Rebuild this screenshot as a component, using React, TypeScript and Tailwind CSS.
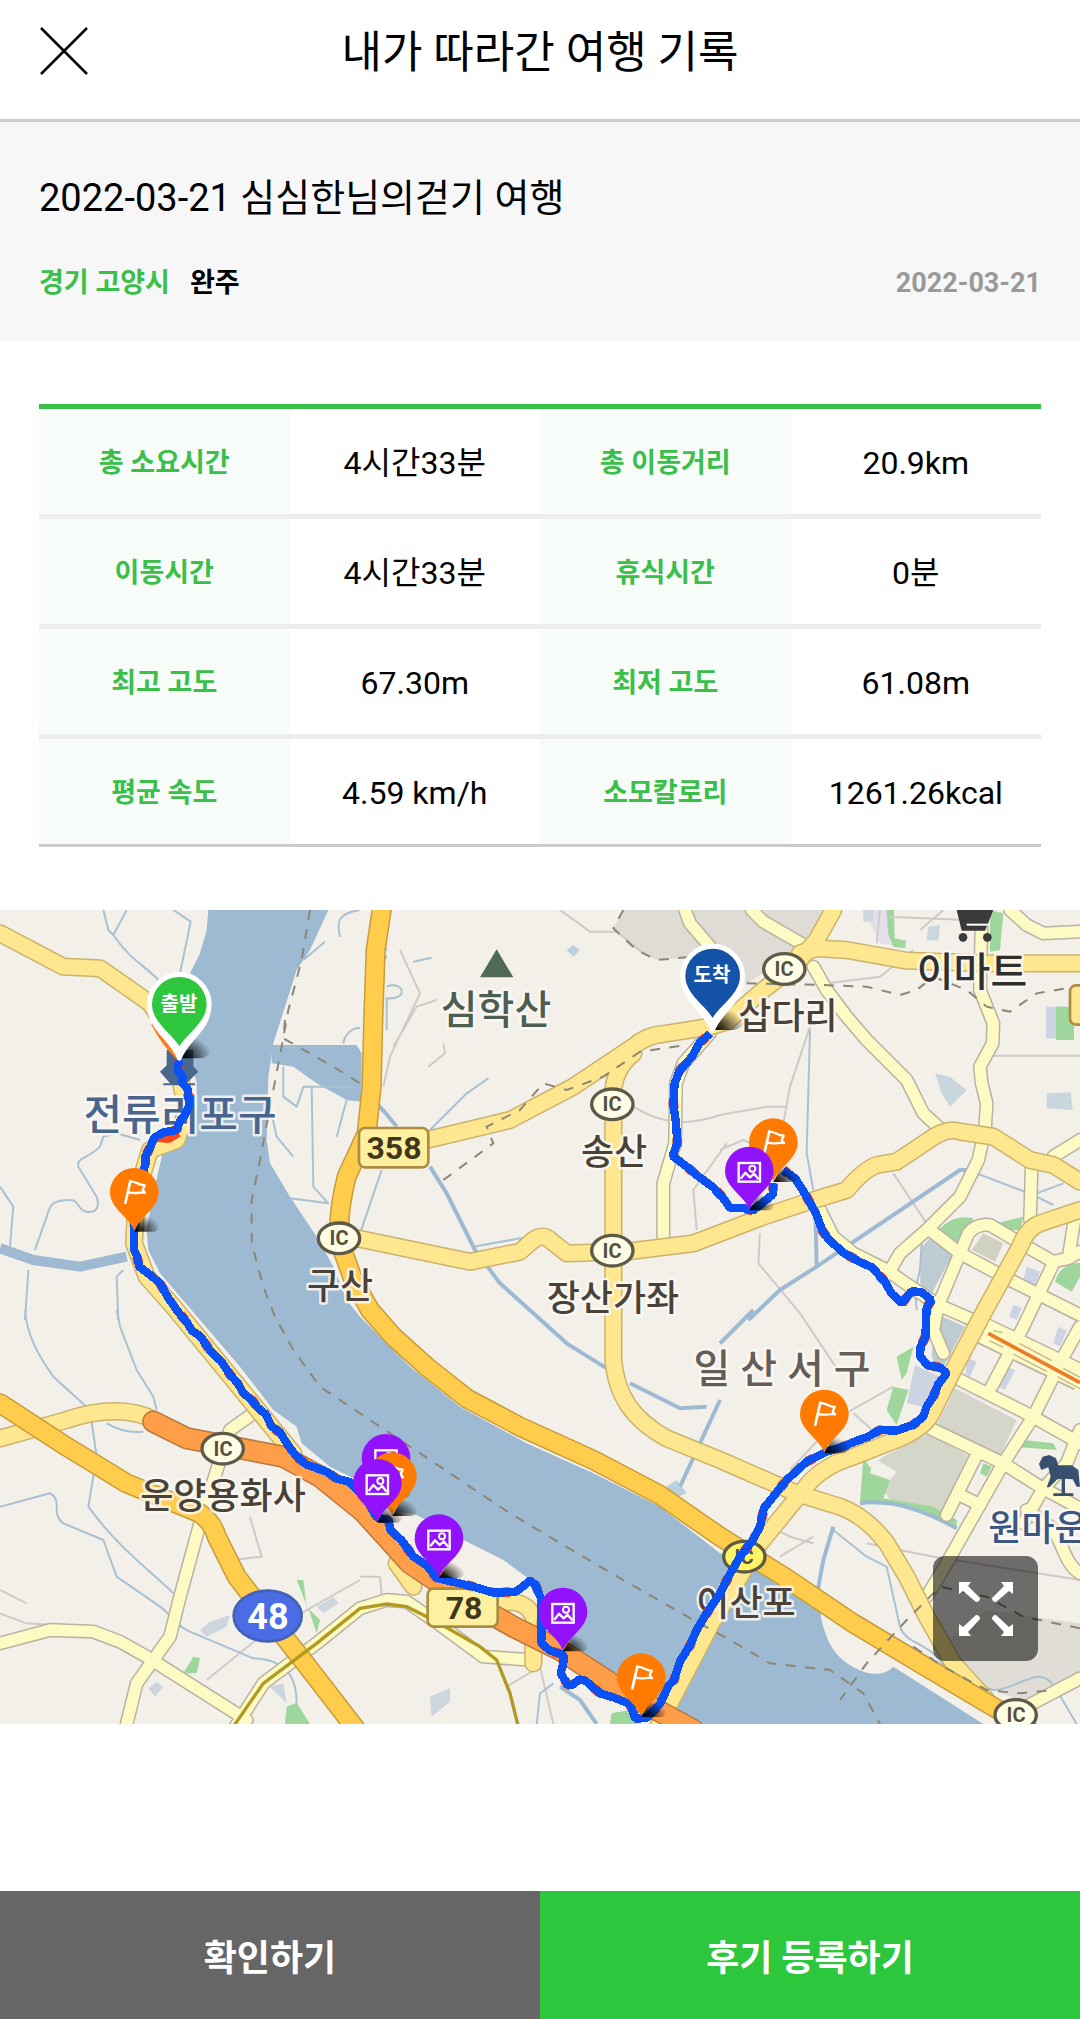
import type { ReactNode } from "react";

interface StatRow {
	label: string;
	value: string;
	label2: string;
	value2: string;
}

interface Point {
	x: number;
	y: number;
}

interface MapLabel extends Point {
	text: string;
	className: string;
}

const STATS: StatRow[] = [
	{ label: "총 소요시간", value: "4시간33분", label2: "총 이동거리", value2: "20.9km" },
	{ label: "이동시간", value: "4시간33분", label2: "휴식시간", value2: "0분" },
	{ label: "최고 고도", value: "67.30m", label2: "최저 고도", value2: "61.08m" },
	{ label: "평균 속도", value: "4.59 km/h", label2: "소모칼로리", value2: "1261.26kcal" },
];

// Map shapes use a 3240 x 2442 grid, map labels a 1080 x 814 grid.
const RIVER =
	"M625 0L620 60L600 130L570 190L560 400L590 520L590 600L560 670L490 720L460 850L440 960L445 1020L480 1090L600 1230L720 1370L820 1500L890 1550L905 1600L990 1670L1060 1705L1130 1790L1250 1815L1410 1900L1510 1950L1620 2030L1720 2210L1760 2235L1790 2280L1870 2320L1980 2380L2090 2442L2950 2442L2680 2270Q2650 2300 2600 2288Q2510 2260 2480 2180Q2455 2120 2460 2050L2160 1930L1980 1790L1780 1690L1580 1600L1380 1490L1230 1370L1080 1220L1040 1170L1000 1070L950 980L870 860L810 760L800 690L805 500L820 400L890 180L930 120L985 0Z";

const STREAMS = [
	"M310 0L325 60L340 75L380 0M340 75C390 150 440 170 480 215M520 0L572 35L540 190",
	"M1080 0C1010 10 1010 40 1020 80M910 150L975 95M1030 400C1035 370 1060 350 1080 355",
	"M810 590L830 680L880 740M850 470L850 560L890 590L910 530L1060 530M935 530L940 830L985 880L870 865M1040 570L1010 680",
	"M420 690L350 670L310 680L300 710C260 750 230 740 235 770L290 860C300 890 290 910 260 905C230 900 240 870 210 870C150 870 150 890 140 920L105 1020M0 830L40 890L30 1010M85 1080L75 1230M370 1080L350 1100L355 1230",
	"M75 1200C80 1270 110 1330 160 1400L270 1500L290 1640L265 1790C360 1920 450 1980 520 2050M350 1200L360 1250L410 1380L460 1460L470 1500M320 1540Q370 1570 430 1565",
	"M0 1790L150 1750C190 1770 150 1810 190 1840L310 1890L350 2000L480 2090C520 2120 530 2150 570 2165L760 2245C850 2250 890 2290 890 2380",
	"M1290 660L1400 550L1465 505M1080 970L1145 780M1160 230C1210 210 1230 270 1160 265L1160 360M1240 155L1295 143",
	"M1420 1010L1560 985L1620 990M2430 360L2420 730L2440 840M2930 790L3100 855L3160 885M3110 850L3190 820",
	"M2500 1860L2600 1940L2660 1970L2700 2150C2720 2210 2800 2190 2850 2300L2980 2340C3060 2340 3120 2250 3170 2340L3230 2442",
	"M1610 2442L1620 2350L1660 2320M2765 1000L2760 1080L2745 1140L2750 1200",
];

const WIDE_STREAMS = [
	"M1155 0L1145 60L1120 130L1160 115M1160 140L1110 145",
	"M1120 570Q1160 610 1190 650M1290 770L1340 850L1425 1020L1500 1120L1600 1210L1700 1300L1820 1375M1890 1420L2040 1495L2120 1490M2160 1470L2040 1730",
	"M2245 1230L2340 1140L2450 1070L2880 780L2920 780",
	"M2445 850L2450 1070",
	"M2500 1850L2470 1950L2450 2060L2520 2120M2160 1300L2260 1200M2580 1780Q2700 1760 2870 1855",
	"M1680 2330L1740 2370L1790 2442",
];

const MINOR_ROADS = [
	"M1680 0L1770 65L1850 65L1930 130M1200 120L1260 250L1170 440L1150 530M1310 270L1250 290L1180 410M1330 400L1335 430L1285 470",
	"M1900 590C1980 640 2060 650 2160 615L2300 590L2360 590M2160 720L2230 690L2300 720M2430 350L2370 530L2350 640L2320 700M2090 960L2080 840L2180 700",
	"M2280 970L2275 1060L2400 1210L2520 1390M2680 790L2780 940M2980 437L3240 437M2340 1940L2440 1880M2330 1860L2370 1880L2440 1900M2600 1900L2800 1940L3240 2010",
	"M2370 1680L2520 1520L2680 1430M2560 1510L2640 1580M2640 0L2630 100M2740 120L2640 200L2480 220M2670 20L2900 30M2830 0L2760 60",
	"M0 2110L80 2140L250 2150M750 1820L785 1940L700 1950M620 2310L780 2180L1080 2010M1080 2000L1140 2000L1145 2060M1520 2330L1620 2270L1660 2442M0 2040L80 2080",
];

const CREAM_ROADS = [
	"M2055 0L2070 40L2130 110",
	"M2255 0L2290 35L2420 110",
	"M2440 170L2480 240L2540 320L2600 390L2720 510L2770 610L2830 665",
	"M2945 20L2940 240L2980 340L2978 400L2940 470L2945 520L2960 580L2955 660L2935 750L2880 860L2780 960L2700 1030L2665 1090",
	"M3030 0L3080 45L3130 70L3240 65",
	"M2130 370L2050 460L2028 520L2025 700L1990 820L1990 980",
	"M2460 900L2500 980L2560 1030L2660 1080L2710 1115L2815 1185L2930 1235",
	"M3240 690L3160 740M3095 770L3090 930",
	"M2790 960L2880 1030L3030 1110L3240 1215M2815 1185L2880 1030L2905 970Q2930 940 2970 945L3080 1010L3160 1055L3205 1045L3225 920M3205 1045L3240 1025",
	"M2815 1185L2800 1260L2830 1330M3160 1060L3070 1250L2975 1430M3240 1250L3190 1340L3100 1520L3010 1660L2840 1960L2780 2060",
	"M2860 1400L3080 1510L3240 1600M2790 1555L3010 1660L3120 1730L3240 1795M2925 1645L2840 1815M3240 1560L3200 1660L3130 1735L3070 1840M2880 1755L2940 1785",
	"M3080 1800L3150 1850C3190 1890 3190 1960 3240 1990M3060 2400L3240 2305",
	"M0 2200L150 2160L280 2165L360 2195L440 2240L740 2430M760 1510L690 1560L660 1650L600 1840L540 2060L510 2180L410 2320L380 2442",
	"M700 2460L790 2320L950 2200L1080 2095L1160 2070L1220 2075L1300 2130L1450 2240L1600 2250",
];

const YELLOW_ROADS = [
	"M0 70L190 170L300 175L450 280L530 400L545 530L560 600L530 690L450 720L410 850L402 1000L440 1100L520 1190L700 1410L880 1630",
	"M1280 690L1530 630L1720 530L1900 410Q1940 375 1990 372L2130 350L2180 335L2290 240L2380 170L2450 90L2500 0",
	"M2400 130L2450 115L2540 120L2720 152L2960 160L3240 160",
	"M1900 430Q1840 480 1840 550L1840 1350C1850 1460 1900 1530 2000 1585L2160 1650L2390 1750L2520 1790Q2600 1820 2660 1900L2720 2000L2780 2120L2860 2260L2960 2370",
	"M1070 985L1410 1055L1560 1025L1600 990Q1630 970 1650 990L1700 1030L1880 1025L2080 1000L2290 920L2410 880L2540 840Q2590 780 2630 765L2690 755L2780 695Q2840 650 2880 665L2980 680L3090 750L3160 765L3240 815",
	"M3240 900L3120 940Q3080 955 3060 1010L2955 1200L2860 1380L2800 1500Q2780 1550 2700 1585L2560 1640Q2460 1670 2410 1740L2280 1900L2140 2130L2010 2380L1970 2460",
	"M0 1585L200 1530C300 1495 400 1495 460 1530",
	"M1190 1960L1240 2030M1500 2080C1580 2060 1620 2120 1600 2180L1600 2260",
];

const GOLD_ROADS = [
	"M1145 0L1127 120L1120 320L1115 530L1100 670L1040 800Q1010 920 1020 1000L1060 1110L1110 1200L1180 1280L1280 1370L1400 1465L1560 1550L1780 1650L1980 1755L2160 1880L2360 2005L2560 2140L2760 2260L3080 2450",
	"M0 1480L200 1610L380 1720L600 1810Q640 1840 650 1880L710 2000L780 2090L900 2240L1070 2460",
];

const ORANGE_ROADS = [
	"M460 1535L560 1585L850 1640L960 1700L1090 1805L1230 1960L1380 2060L1540 2150L1680 2220L1880 2350L2080 2460",
];

const SUBWAY =
	"M700 2450L790 2320L950 2200L1080 2095L1160 2082L1220 2090L1300 2130L1440 2210L1490 2250L1530 2350L1555 2450";

const BORDERS = [
	"M930 0L905 150L865 300L845 410L820 540L780 750L755 870L755 1000L790 1130L825 1220L880 1320L960 1430L1080 1510L1320 1670L1530 1810L1800 1970L2080 2130L2190 2190L2310 2260L2490 2280L2590 2350L2640 2442",
	"M855 330L850 385L1000 470L1080 520",
	"M1870 0L1840 55L1910 120L1970 150L2080 140",
	"M1330 810L1480 700L1460 650L1560 600L1630 520L1700 540L1810 500L1920 425L2060 405",
	"M2240 220L2470 225L2600 230L2700 255L2750 240L2800 200L2900 240L2960 290L3030 305L3110 250L3230 230",
	"M3240 2155L3070 2120L2960 2060L2820 2030L2720 2130L2600 2260L2520 2370",
	"M2740 2210L2830 2270L2960 2340L3060 2350L3160 2340",
];

const ROUTE = [
	"M537 450L533 482L548 500L546 518L562 536L566 565L566 590L552 620L540 632L530 660L488 668L462 684L452 708L436 740L436 764L428 790L408 880L402 960L402 1020L410 1036L418 1070L450 1094L480 1120L504 1162L530 1200L560 1236L576 1262L602 1280L630 1322L664 1354L690 1394L714 1420L730 1450L756 1470L772 1492L798 1514L814 1548L842 1570L864 1606L890 1640L920 1664L980 1685L1010 1706L1050 1716L1100 1770L1130 1822L1165 1830L1172 1862L1204 1890L1240 1940L1280 1966L1310 2004L1370 2018L1420 2030L1480 2048L1546 2046L1568 2030L1590 2012L1606 2024L1625 2070L1624 2200L1650 2222L1690 2234L1690 2260L1682 2290L1704 2326L1718 2324L1738 2308L1756 2312L1800 2350L1840 2362L1890 2382L1906 2426L1940 2424L1980 2382L2006 2326L2022 2310L2040 2254L2070 2206L2090 2160L2120 2110L2160 2050L2190 1992L2220 1940L2256 1894L2280 1850L2292 1794L2326 1752L2360 1710L2420 1655L2480 1625L2530 1610L2560 1596L2600 1582L2640 1560L2690 1562L2740 1544L2770 1520L2780 1490L2800 1460L2814 1424L2840 1390L2820 1372L2782 1366L2760 1338L2762 1310L2776 1280L2780 1194L2794 1170L2764 1146L2734 1144L2706 1180L2674 1150L2654 1114L2616 1072L2580 1056L2530 1028L2488 990L2468 964L2448 910L2414 850L2386 806L2350 780",
	"M2320 820L2318 854L2258 902L2230 894L2190 894L2168 862L2140 832L2096 800L2060 770L2018 738L2032 700L2028 640L2020 580L2024 520L2040 480L2076 440L2098 400L2130 370",
];

const BLOCKS = [
	{ d: "M2590 0L2670 0L2680 90L2720 90L2710 110L2640 100Z", fill: "#e4e0ea" },
	{ d: "M2660 0L2682 0L2684 85L2718 92L2716 115L2680 110L2664 70Z", fill: "#9ed69b" },
	{ d: "M2590 0H2620V35H2590ZM2785 50L2820 45L2815 92L2780 90Z", fill: "#ccd6dd" },
	{ d: "M2970 0L3010 10L3000 120L2970 125Z", fill: "#9ed69b" },
	{ d: "M3138 290H3190V385H3138Z", fill: "#ccd3e2" },
	{ d: "M3168 290H3222V390H3168Z", fill: "#9ed69b" },
	{ d: "M2805 490L2850 500L2900 540L2850 590L2825 550ZM3140 550L3212 547L3218 600L3140 595Z", fill: "#c9d6de" },
	{ d: "M2815 960Q2860 910 2920 925L2895 1000L2860 995ZM2990 940L3070 920L3060 960L3030 960Z", fill: "#9ed69b" },
	{ d: "M2765 1010L2790 985L2860 1030L2790 1160L2760 1120Z", fill: "#bfcbd3" },
	{ d: "M2950 970L3010 1000L2985 1055L2915 1020Z", fill: "#d0d0c3" },
	{ d: "M3165 1115Q3180 1060 3240 1058V1100L3215 1145Z", fill: "#9ed69b" },
	{ d: "M3080 1070L3120 1085L3105 1125L3070 1110ZM3040 1185L3065 1195L3050 1230L3028 1220ZM3175 1250L3200 1262L3180 1310L3160 1300ZM2905 1345L2930 1355L2910 1400L2895 1390ZM3020 1370L3045 1380L3015 1440L2995 1430Z", fill: "#ccd3e2" },
	{ d: "M2805 1210L2895 1250L2820 1390L2795 1340Z", fill: "#bfcbd3" },
	{ d: "M2745 1365L2820 1400L2770 1490L2720 1480Z", fill: "#ccd3e2" },
	{ d: "M2690 1340L2740 1310L2720 1390L2705 1410ZM2680 1430L2725 1440L2690 1545L2660 1500Z", fill: "#9ed69b" },
	{ d: "M2865 1435L3050 1530L3000 1640L2810 1545Z", fill: "#d3d6c8" },
	{ d: "M2650 1640L2790 1570L2910 1640L2820 1810L2680 1780L2600 1680Z", fill: "#d3d6c8" },
	{ d: "M2590 1640L2620 1690L2670 1710L2650 1765L2800 1790L2870 1830V1855L2740 1790L2580 1780Z", fill: "#9ed69b" },
	{ d: "M2620 1645L2690 1685L2670 1710L2610 1690Z", fill: "#f3f0ea" },
	{ d: "M2950 1660L2975 1670L2960 1700L2940 1690ZM3070 1590L3160 1600L3170 1620L3060 1612Z", fill: "#9ed69b" },
	{ d: "M2830 2200L2960 2100L3240 2140V2300L3090 2380L2950 2330Z", fill: "#e0ddd6" },
	{ d: "M890 2010L910 2010L920 2090L960 2130L950 2170L930 2110ZM550 2290L580 2240L600 2245L590 2290ZM860 2390L890 2378L930 2442H855Z", fill: "#9ed69b" },
	{ d: "M600 2160L630 2135L690 2115L680 2150L620 2180ZM445 2335L470 2315L490 2330L465 2360ZM810 2330L850 2320L860 2380ZM950 2090L1000 2060L1015 2080L970 2110Z", fill: "#cdd6df" },
	{ d: "M1290 2360L1350 2335L1350 2375L1295 2420Z", fill: "#cdd6df" },
	{ d: "M1835 2410L1890 2400L1910 2442H1830Z", fill: "#9ed69b" },
	{ d: "M1700 120L1720 105L1740 120L1720 140ZM2000 1730L2030 1710L2060 1750L2020 1765Z", fill: "#bccfdd" },
];

const ORANGE_PINS: Point[] = [
	{ x: 403, y: 847 },
	{ x: 2320, y: 698 },
	{ x: 2473, y: 1512 },
	{ x: 1924, y: 2303 },
];

const PHOTO_PINS: Point[] = [
	{ x: 2248, y: 783 },
	{ x: 1132, y: 1720 },
	{ x: 1317, y: 1886 },
	{ x: 1689, y: 2106 },
];

const IC_SIGNS: Point[] = [
	{ x: 1837, y: 583 },
	{ x: 1837, y: 1022 },
	{ x: 2353, y: 177 },
	{ x: 1017, y: 985 },
	{ x: 668, y: 1616 },
	{ x: 2233, y: 1940 },
	{ x: 3047, y: 2415 },
];

const MAP_LABELS: MapLabel[] = [
	{ x: 180, y: 220, text: "전류리포구", className: "fill-[#49658c] text-[42px]" },
	{ x: 496, y: 114, text: "심학산", className: "fill-[#4d5d50] text-[40px]" },
	{ x: 614, y: 255, text: "송산", className: "fill-[#4a4239] text-[36px]" },
	{ x: 613, y: 401, text: "장산가좌", className: "fill-[#4a4239] text-[36px]" },
	{ x: 340, y: 389, text: "구산", className: "fill-[#4a4239] text-[36px]" },
	{ x: 788, y: 119, text: "삽다리", className: "fill-[#4a4239] text-[36px]" },
	{ x: 972, y: 76, text: "이마트", className: "fill-[#2f2f2f] text-[40px]" },
	{ x: 782, y: 473, text: "일 산 서 구", className: "fill-[#665c58] text-[40px]" },
	{ x: 223, y: 599, text: "운양용화사", className: "fill-[#4a4239] text-[36px]" },
	{ x: 746, y: 706, text: "이산포", className: "fill-[#4a4239] text-[36px]" },
	{ x: 1038, y: 631, text: "원마운", className: "fill-[#3b5680] text-[36px]" },
];

interface RoadsProps {
	paths: string[];
	fill: string;
	edge: string;
	width: number;
}

function Roads({ paths, fill, edge, width }: RoadsProps) {
	return (
		<g fill="none" strokeLinecap="round" strokeLinejoin="round">
			{paths.map((d) => (
				<path d={d} key={`edge-${d}`} stroke={edge} strokeWidth={width + 9} />
			))}
			{paths.map((d) => (
				<path d={d} key={d} stroke={fill} strokeWidth={width} />
			))}
		</g>
	);
}

function Pin({ x, y, fill, children }: Point & { fill: string; children: ReactNode }) {
	return (
		<g transform={`translate(${x} ${y})`}>
			<path d="M0 118L22 78Q48 52 78 68Q86 108 62 118Z" fill="url(#pin-shadow)" />
			<path
				d="M0 116C-14 74 -73 50 -73 0A73 73 0 0 1 73 0C73 50 14 74 0 116Z"
				fill={fill}
			/>
			<g fill="none" stroke="#fff" strokeLinejoin="round">
				{children}
			</g>
		</g>
	);
}

function FlagPin({ x, y }: Point) {
	return (
		<Pin fill="#ff7a00" x={x} y={y}>
			<path d="M-27 32L-12 -34" strokeLinecap="round" strokeWidth="8" />
			<path
				d="M-12 -32C4 -35 10 -22 31 -21L25 -7L32 1C14 -2 8 6 -18 0"
				strokeWidth="7"
			/>
		</Pin>
	);
}

function PhotoPin({ x, y }: Point) {
	return (
		<Pin fill="#9212fb" x={x} y={y}>
			<rect height="56" strokeLinejoin="miter" strokeWidth="7" width="64" x="-32" y="-24" />
			<path d="M-26 23L-12 5L2 19L14 8L28 25" strokeWidth="7" />
			<circle cx="9" cy="-7" r="9" strokeWidth="6" />
		</Pin>
	);
}

function EndPin({ x, y, fill }: Point & { fill: string }) {
	return (
		<g transform={`translate(${x} ${y})`}>
			<path d="M0 162L35 110Q60 75 98 100Q106 155 65 162Z" fill="url(#pin-shadow)" />
			<path
				d="M0 162C-20 104 -90 76 -90 0A90 90 0 0 1 90 0C90 76 20 104 0 162Z"
				fill="#fff"
				stroke="#fff"
				strokeWidth="14"
				strokeLinejoin="round"
			/>
			<path d="M0 126C-22 88 -82 54 -82 0A82 82 0 0 1 82 0C82 54 22 88 0 126Z" fill={fill} />
		</g>
	);
}

function RouteMap() {
	return (
		<svg
			aria-label="이동 경로 지도"
			className="block h-auto w-full bg-[#f3f0ea]"
			role="img"
			viewBox="0 0 1080 814"
		>
			<defs>
				<radialGradient cx="0" cy="1" id="pin-shadow" r="1">
					<stop offset="0" stopColor="#000" />
					<stop offset="0.35" stopColor="#000" stopOpacity="0.75" />
					<stop offset="1" stopColor="#000" stopOpacity="0" />
				</radialGradient>
			</defs>

			<svg height="814" viewBox="0 0 3240 2442" width="1080">
				<path d="M1870 0L1840 55L1910 120L1970 150L2080 140L2240 220L2400 120L2480 0Z" fill="#dfdcd6" />
				<path d={RIVER} fill="#9dbad2" />
				<path
					d="M815 405H1070L1085 430V575L1040 570L950 520L880 470L815 460Z"
					fill="#9dbad2"
				/>
				{BLOCKS.map(({ d, fill }) => (
					<path d={d} fill={fill} key={d} />
				))}
				<g fill="none" strokeLinejoin="round">
					{MINOR_ROADS.map((d) => (
						<path d={d} key={d} stroke="#cfcac7" strokeWidth="6" />
					))}
					{STREAMS.map((d) => (
						<path d={d} key={d} stroke="#a9c1d3" strokeWidth="6" />
					))}
					{WIDE_STREAMS.map((d) => (
						<path d={d} key={d} stroke="#9dbad2" strokeWidth="12" />
					))}
					<path d="M0 1015L100 1050L240 1070L380 1040" stroke="#9dbad2" strokeWidth="30" />
				</g>

				<path d="M2940 1258L3240 1402" fill="none" stroke="#b9b2a3" strokeWidth="84" />
				<Roads edge="#b9b2a3" fill="#fdfac3" paths={CREAM_ROADS} width={34} />
				<path d="M2935 1255L3250 1406" fill="none" stroke="#fdfac3" strokeWidth="75" />
				<path d="M2965 1270L3240 1418" fill="none" stroke="#ee7b28" strokeWidth="11" />
				<path
					d="M3058 1300L3155 1352M3040 1332L3140 1384M2980 1262L3008 1268M2968 1292L3010 1312M3190 1375L3240 1402M3172 1400L3240 1436"
					fill="none"
					stroke="#c9b58a"
					strokeWidth="4"
				/>
				<Roads edge="#cbb36d" fill="#ffe78f" paths={YELLOW_ROADS} width={46} />
				<Roads edge="#c79d3c" fill="#ffcc4b" paths={GOLD_ROADS} width={52} />
				<Roads edge="#b9783f" fill="#ff9e48" paths={ORANGE_ROADS} width={58} />
				<path d={SUBWAY} fill="none" stroke="#b09a22" strokeWidth="10" />
				<g fill="none" stroke="#8d8674" strokeDasharray="30 28" strokeWidth="6">
					{BORDERS.map((d) => (
						<path d={d} key={d} />
					))}
				</g>

				{/* place symbols */}
				<path d="M1440 202L1490 118L1540 202Z" fill="#4f6b55" />
				<path d="M2870 0H2980L2955 62H2885Z" fill="#3a3a3a" />
				<path d="M2900 44H2968" stroke="#fff" strokeWidth="6" />
				<circle cx="2889" cy="82" fill="#3a3a3a" r="13" />
				<circle cx="2962" cy="82" fill="#3a3a3a" r="13" />
				<path
					d="M3117 1662L3128 1640L3148 1635L3168 1645L3175 1666H3215L3235 1680L3240 1730H3230L3218 1708L3195 1706V1750H3220V1758H3160V1750H3185V1706L3172 1708L3148 1732H3140L3152 1700L3145 1672L3124 1680Z"
					fill="#38506f"
				/>
				<path d="M500 420H580V470H500Z" fill="#4a678e" />
				<path d="M480 485L515 452H565L595 485L560 520H510ZM490 520H585V526H490Z" fill="#4a678e" />

				<g strokeWidth="8">
					<rect fill="#fff0a0" height="118" rx="18" stroke="#aa8d42" width="208" x="1077" y="654" />
					<rect fill="#fff0a0" height="114" rx="18" stroke="#aa8d42" width="210" x="1283" y="2036" />
					<rect fill="#ffe78f" height="118" rx="18" stroke="#aa8d42" width="100" x="3210" y="226" />
					<ellipse cx="803" cy="2118" fill="#4a6ce4" rx="102" ry="76" stroke="#4461b8" />
				</g>
				{IC_SIGNS.map(({ x, y }) => (
					<ellipse
						cx={x}
						cy={y}
						fill={x === 2233 ? "#fff466" : "#fffde4"}
						key={`${x}-${y}`}
						rx="62"
						ry="46"
						stroke="#5d5a48"
						strokeWidth="10"
					/>
				))}
			</svg>

			<g className="font-bold" textAnchor="middle">
				{IC_SIGNS.map(({ x, y }) => (
					<text
						className="fill-[#55513f] text-[20px]"
						key={`${x}-${y}`}
						x={Math.round(x / 3)}
						y={Math.round(y / 3) + 7}
					>
						IC
					</text>
				))}
				<text className="fill-[#40371a] text-[32px]" x="394" y="249">
					358
				</text>
				<text className="fill-[#40371a] text-[32px]" x="464" y="709">
					78
				</text>
				<text className="fill-white text-[36px]" x="268" y="719">
					48
				</text>
			</g>
			<g
				className="font-medium"
				paintOrder="stroke"
				stroke="#fbf9f4"
				strokeLinejoin="round"
				strokeOpacity="0.85"
				strokeWidth="5"
				textAnchor="middle"
			>
				{MAP_LABELS.map(({ x, y, text, className }) => (
					<text className={className} key={text} x={x} y={y}>
						{text}
					</text>
				))}
			</g>

			<svg height="814" viewBox="0 0 3240 2442" width="1080">
				<g fill="none" strokeLinejoin="bevel">
					<path d="M460 340Q490 400 537 445" stroke="#ff7a1a" strokeWidth="14" />
					<path d="M470 682L505 686L535 668" stroke="#f4471b" strokeWidth="26" />
					{ROUTE.map((d) => (
						<path
							d={d}
							key={`under-${d}`}
							stroke="#e8402a"
							strokeDasharray="22 90"
							strokeWidth="29"
						/>
					))}
					{ROUTE.map((d) => (
						<path d={d} key={d} shapeRendering="crispEdges" stroke="#0a50f5" strokeWidth="25" />
					))}
				</g>
				<EndPin fill="#2dc63d" x={538} y={283} />
				<EndPin fill="#1553a8" x={2138} y={198} />
				{ORANGE_PINS.map((pin) => (
					<FlagPin key={`${pin.x}-${pin.y}`} {...pin} />
				))}
				<PhotoPin x={1158} y={1645} />
				<FlagPin x={1177} y={1700} />
				{PHOTO_PINS.map((pin) => (
					<PhotoPin key={`${pin.x}-${pin.y}`} {...pin} />
				))}
			</svg>
			<g className="fill-white text-[20px] font-bold" textAnchor="middle">
				<text x="179" y="101">
					출발
				</text>
				<text x="712" y="72">
					도착
				</text>
			</g>
		</svg>
	);
}

export default function App() {
	return (
		<div className="flex min-h-screen flex-col bg-white font-[Roboto,'Noto_Sans_CJK_KR',sans-serif] text-black">
			<header className="grid grid-cols-[1fr_auto_1fr] items-center border-b-[3px] border-[#ccc] px-10 pt-4 pb-[29px]">
				<button aria-label="닫기" className="w-12 pb-1" type="button">
					<svg className="h-12 w-12" fill="none" stroke="currentColor" viewBox="0 0 48 48">
						<path d="M1 1L47 47M47 1L1 47" strokeWidth="2.5" />
					</svg>
				</button>
				<h1 className="text-[44px] leading-[74px]">내가 따라간 여행 기록</h1>
			</header>

			<section className="bg-[#f7f7f7] px-[39px] pt-12 pb-[38px]">
				<h2 className="text-[38px] leading-[56px]">2022-03-21 심심한님의걷기 여행</h2>
				<div className="mt-[37px] flex items-center text-[27px] leading-10 font-bold">
					<span className="text-[#3abf4a]">경기 고양시</span>
					<span className="ml-5">완주</span>
					<time className="ml-auto text-[#999]" dateTime="2022-03-21">
						2022-03-21
					</time>
				</div>
			</section>

			<main>
				<div className="px-[39px] py-[63px]">
					<table className="w-full table-fixed border-separate border-spacing-0 border-t-[5px] border-[#3abf4a] text-center">
						<tbody className="[&>tr:last-child>*]:h-[108px] [&>tr:last-child>*]:border-b-[3px] [&>tr:last-child>*]:border-[#ccc]">
							{STATS.map(({ label, value, label2, value2 }) => (
								<tr
									className="*:h-[110px] *:border-b-[5px] *:border-[#ededed] *:px-0 *:pb-0"
									key={label}
								>
									<th className="bg-[#f7fcf8] pt-1 text-[27px] font-bold text-[#3abf4a]" scope="row">
										{label}
									</th>
									<td className="pt-0.5 text-[32px]">{value}</td>
									<th className="bg-[#f7fcf8] pt-1 text-[27px] font-bold text-[#3abf4a]" scope="row">
										{label2}
									</th>
									<td className="pt-0.5 text-[32px]">{value2}</td>
								</tr>
							))}
						</tbody>
					</table>
				</div>

				<div className="relative">
					<RouteMap />
					<button
						aria-label="지도 확대"
						className="absolute right-[42px] bottom-[63px] flex h-[105px] w-[105px] items-center justify-center rounded-xl bg-black/55 text-white"
						type="button"
					>
						<svg className="h-[54px] w-[54px]" fill="currentColor" viewBox="0 0 54 54">
							<path d="M0 0H12L9 4L21 16Q21 20 17 20L4 9L0 12Z" />
							<path d="M54 0V12L50 9L37 20Q33 20 33 16L45 4L42 0Z" />
							<path d="M0 54V42L4 45L17 33Q21 33 21 37L9 50L12 54Z" />
							<path d="M54 54H42L45 50L33 37Q33 33 37 33L50 45L54 42Z" />
						</svg>
					</button>
				</div>
			</main>

			<footer className="mt-auto grid grid-cols-2 text-[36px] font-bold text-white">
				<button className="h-32 bg-[#666] pt-2" type="button">
					확인하기
				</button>
				<button className="h-32 bg-[#2dc73e] pt-2" type="button">
					후기 등록하기
				</button>
			</footer>
		</div>
	);
}
